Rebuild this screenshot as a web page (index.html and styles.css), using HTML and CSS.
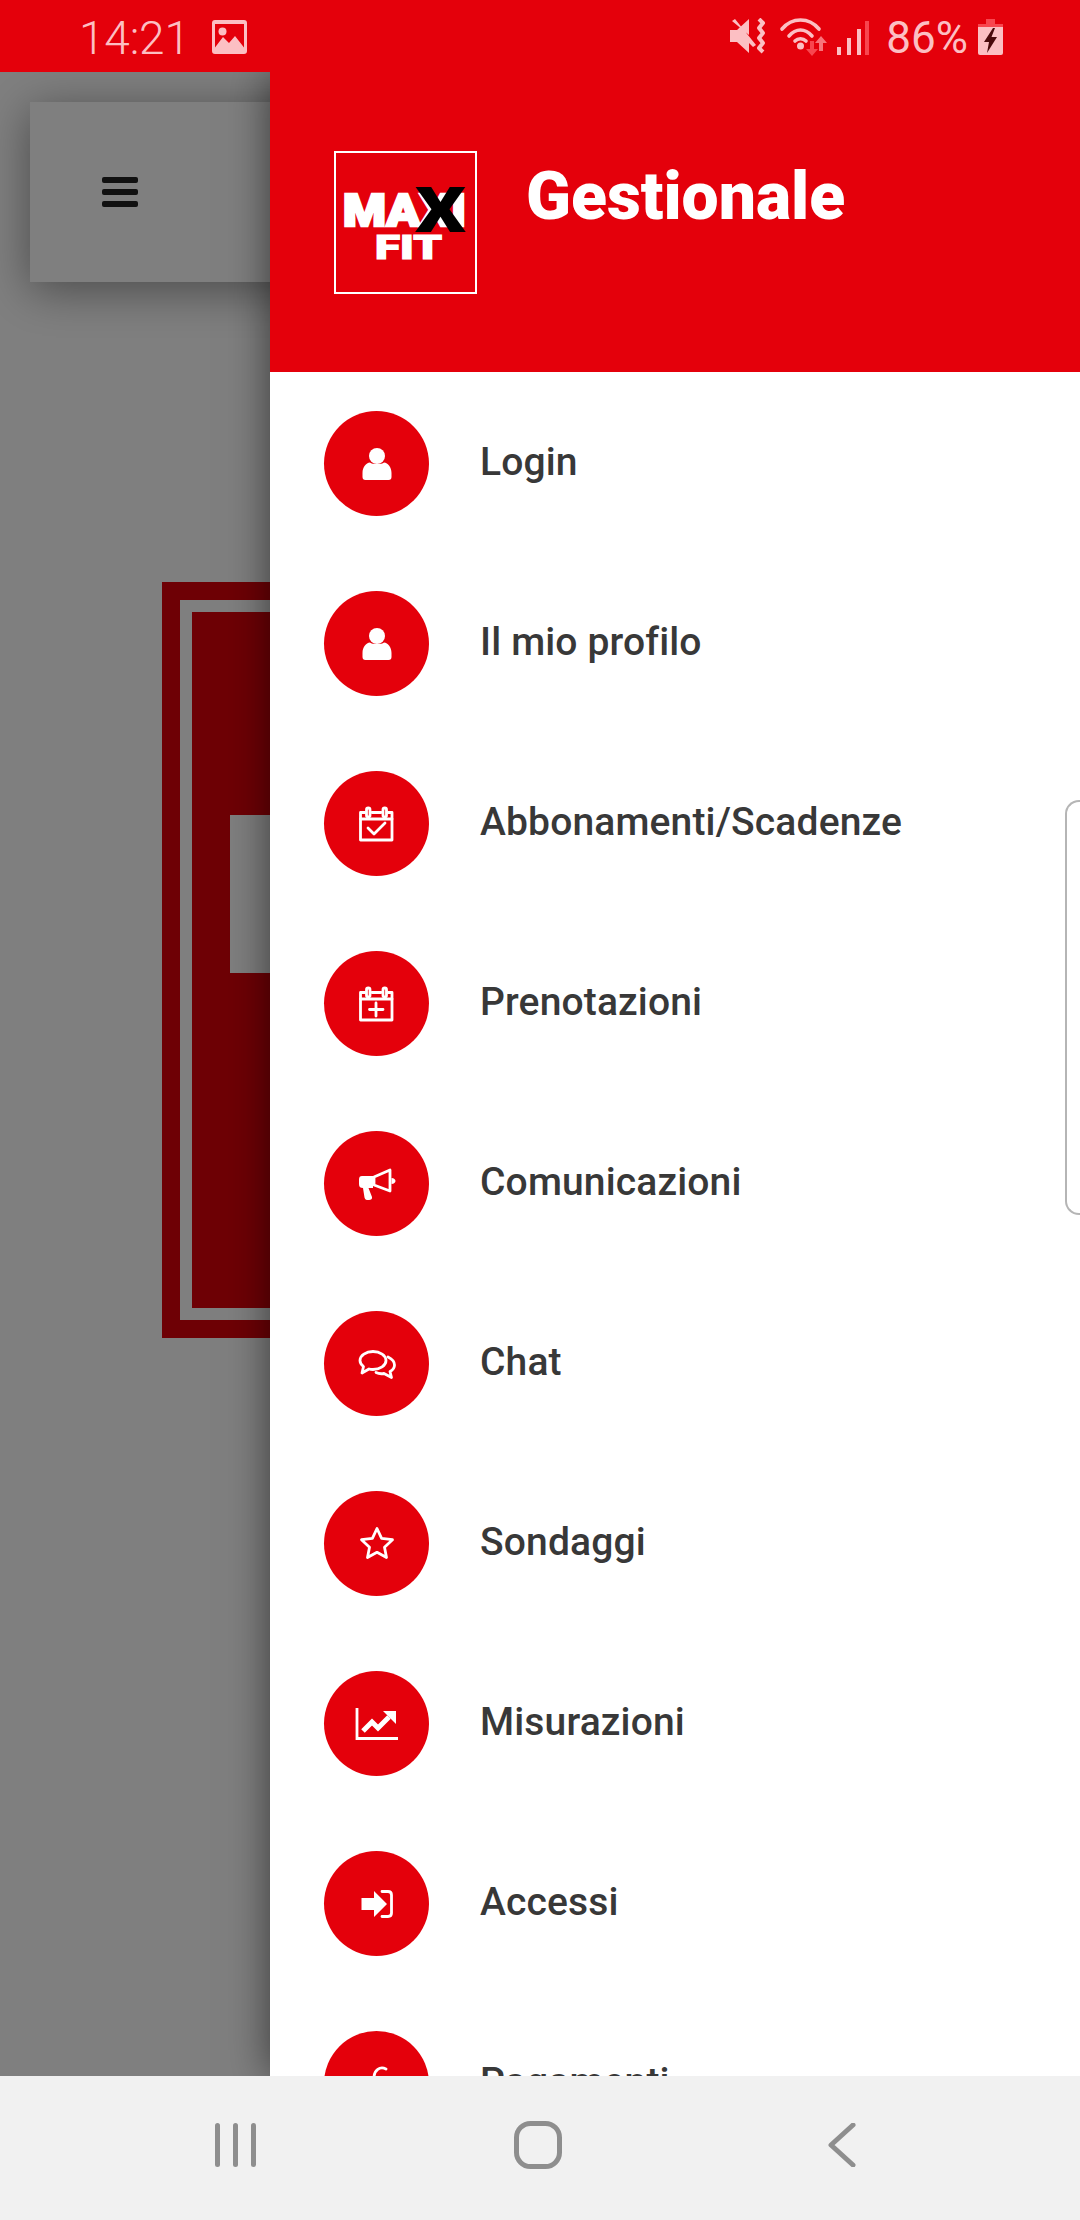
FILE: index.html
```html
<!DOCTYPE html>
<html lang="it">
<head>
<meta charset="utf-8">
<title>Gestionale</title>
<link rel="stylesheet" href="styles.css">
</head>
<body>
<div class="phone">
  <div class="status">
    <span class="time">14:21</span>
    <svg class="st-pic" width="35" height="34" viewBox="0 0 35 34"><path fill-rule="evenodd" d="M3 0H32a3 3 0 0 1 3 3V31a3 3 0 0 1-3 3H3a3 3 0 0 1-3-3V3a3 3 0 0 1 3-3ZM3 27.500 11 17l6 6 6-7 9 11.500V4H3Z"/><circle cx="10.500" cy="11.500" r="4"/></svg>
    <div class="st-right">
      <svg width="36" height="36" viewBox="0 0 36 36"><path d="M0 12H7L19 1V17L2 3 5 1 26 27 23 29 19 25V35L7 24H0Z"/><path class="st-line" d="M29 1 33 5 29 10 33 15 29 20 33 25 29 30 33 34"/></svg>
      <svg class="st-wifi" width="44" height="38" viewBox="0 0 44 38"><path class="st-arc" d="M2 11C12 -1 29 -1 39 11M9 18C16 10 25 10 32 18"/><path class="st-arc" d="M15 23C18 20 23 20 26 23"/><circle class="st-fill" cx="20.500" cy="28" r="3.500"/><path class="st-dim" d="M30 23h4v8h4l-6 7-6-7h4Z"/><path class="st-dim2" d="M42 19l6 7h-4v8h-4v-8h-4Z" transform="translate(-1 -1)"/></svg>
      <svg class="st-signal" width="32" height="34" viewBox="0 0 32 34"><rect x="0" y="26" width="4" height="8"/><rect x="10" y="17" width="4" height="17"/><rect x="20" y="8" width="4" height="26"/><rect class="st-faint" x="28" y="0" width="4" height="34"/></svg>
      <span class="pct">86%</span>
      <svg class="st-batt" width="25" height="36" viewBox="0 0 25 36"><path class="st-dim" d="M8 0H17V5H25V10H0V5H8Z"/><path d="M0 8H25V34a2 2 0 0 1-2 2H2a2 2 0 0 1-2-2Z"/><path class="st-bolt" d="M15 9 6 23H11L9 34 19 18H13.500L17 9Z"/></svg>
    </div>
  </div>

  <div class="main">
    <div class="page">
      <div class="bar">
        <div class="burger"><i></i><i></i><i></i></div>
      </div>
      <div class="frame"><div class="frame-gap"><div class="frame-core"><div class="frame-hole"></div></div></div></div>
    </div>
    <div class="scrim"></div>

    <aside class="drawer">
      <header class="drawer-head">
        <svg class="logo" width="143" height="143" viewBox="0 0 143 143">
          <rect class="logo-box" x="1" y="1" width="141" height="141"/>
          <text class="logo-max" x="9" y="75" textLength="123" lengthAdjust="spacingAndGlyphs">MAXI</text>
          <text class="logo-x" x="81" y="81" textLength="51" lengthAdjust="spacingAndGlyphs">X</text>
          <text class="logo-fit" x="41" y="108" textLength="67" lengthAdjust="spacingAndGlyphs">FIT</text>
        </svg>
        <h1 class="title">Gestionale</h1>
      </header>
      <nav class="menu">
        <a class="item"><span class="dot"><svg viewBox="-24 -24 48 48"><use href="#i-user"/></svg></span><span class="label">Login</span></a>
        <a class="item"><span class="dot"><svg viewBox="-24 -24 48 48"><use href="#i-user"/></svg></span><span class="label">Il mio profilo</span></a>
        <a class="item"><span class="dot"><svg viewBox="-24 -24 48 48"><use href="#i-cal"/><path class="ln" d="M-9 4-3 10 8-1"/></svg></span><span class="label">Abbonamenti/Scadenze</span></a>
        <a class="item"><span class="dot"><svg viewBox="-24 -24 48 48"><use href="#i-cal"/><path class="ln" d="M-1 -1V12M-7.500 5.500H6"/></svg></span><span class="label">Prenotazioni</span></a>
        <a class="item"><span class="dot"><svg viewBox="-24 -24 48 48"><path class="fl" d="M-15-8H-4V4H-8.500L-5 13C-4.500 15-6 16-8 16H-10C-11.500 16-12 15-12.500 13.500L-14 4C-16.500 4-18 3-18-0V-4.500C-18-7-17-8-15-8Z"/><path class="ln" d="M-3-7 13-14V7L-3 1Z"/><path class="fl" d="M14.500-6C17-6 18.500-4.500 18.500-3S17 0 14.500 0Z"/></svg></span><span class="label">Comunicazioni</span></a>
        <a class="item"><span class="dot"><svg viewBox="-24 -24 48 48"><path class="ln" d="M-4-12.500C-11-12.500-17-8.500-17-3.500-17-1-15.500 1-13.500 2.500L-15 9-8 5C-6.500 5.500-5.500 5.500-4 5.500 3 5.500 9 1.500 9-3.500S3-12.500-4-12.500Z"/><path class="ln" d="M11-7C15-5 17.500-2.500 17.500 1 17.500 4 16 6 13 7.500L14.500 13.500 7 9.500C4 10 1 9.500-1 8.500"/></svg></span><span class="label">Chat</span></a>
        <a class="item"><span class="dot"><svg viewBox="-24 -24 48 48"><path class="ln" d="M0-15.500 4.600-5.700 15.500-4.300 7.500 3.200 9.500 13.500 0 8.300-9.500 13.500-7.500 3.200-15.500-4.300-4.600-5.700Z"/></svg></span><span class="label">Sondaggi</span></a>
        <a class="item"><span class="dot"><svg viewBox="-24 -24 48 48"><path class="ln sq" d="M-20-16V14.500H21"/><path class="ln wide" d="M-14 7-5-2 1 4 12-7"/><path class="fl" d="M6-13H19V0Z"/></svg></span><span class="label">Misurazioni</span></a>
        <a class="item"><span class="dot"><svg viewBox="-24 -24 48 48"><path class="fl" d="M-15.500-6H-3V-13L10 0-3 13V6H-15.500Z"/><path class="ln" d="M5-12.500H11C13.500-12.500 14.500-11.500 14.500-9V9C14.500 11.500 13.500 12.500 11 12.500H5"/></svg></span><span class="label">Accessi</span></a>
        <a class="item"><span class="dot"><svg viewBox="-24 -24 48 48"><path class="ln" d="M9-15C3-18-3-14-3-6V8"/></svg></span><span class="label">Pagamenti</span></a>
      </nav>
    </aside>

    <div class="handle"></div>
  </div>

  <div class="navbar">
    <svg width="41" height="44" viewBox="0 0 41 44"><rect x="0" y="0" width="5" height="44" rx="2.500"/><rect x="18" y="0" width="5" height="44" rx="2.500"/><rect x="36" y="0" width="5" height="44" rx="2.500"/></svg>
    <svg class="nv-home" width="48" height="48" viewBox="0 0 48 48"><rect x="2.500" y="2.500" width="43" height="43" rx="14"/></svg>
    <svg class="nv-back" width="28" height="44" viewBox="0 0 28 44"><path d="M25 2 3 22 25 42"/></svg>
  </div>
</div>

<svg class="defs" width="0" height="0">
  <defs>
    <g id="i-user">
      <circle class="fl" cx="0" cy="-8" r="8"/>
      <path class="fl" d="M-7-1.500C-5 .5 5 .5 7-1.500 11-1 14.500 3 14.500 9V13C14.500 15 13.500 16 11.500 16H-11.500C-13.500 16-14.500 15-14.500 13V9C-14.500 3-11-1-7-1.500Z"/>
    </g>
    <g id="i-cal">
      <path class="ln" d="M-12-11.500H-16.500V16H15V-11.500H11M-5-11.500H4"/>
      <path class="ln" d="M-16.500-5H15"/>
      <rect class="ln" x="-10.500" y="-16" width="3.500" height="9" rx="1.750"/>
      <rect class="ln" x="6" y="-16" width="3.500" height="9" rx="1.750"/>
    </g>
  </defs>
</svg>
</body>
</html>
```

FILE: styles.css
```css
* { box-sizing: border-box; }
html, body { margin: 0; padding: 0; }
body { font-family: Roboto, "Liberation Sans", sans-serif; background: #fff; }
.phone { width: 1080px; height: 2220px; display: flex; flex-direction: column; overflow: hidden; }
.defs { position: absolute; }

/* status bar */
.status { height: 72px; flex: none; background: #e4000b; display: flex; align-items: center; padding: 0 77px 0 79px; color: #fcbfc3; }
.status svg { fill: #fcbfc3; display: block; flex: none; }
.time { font-size: 46px; font-weight: 300; line-height: 72px; letter-spacing: -.2px; margin-top: 3px; }
.st-pic { margin-left: 22px; margin-top: 2px; }
.st-right { margin-left: auto; display: flex; align-items: center; }
.st-line { fill: none !important; stroke: #fcbfc3; stroke-width: 4; stroke-linejoin: round; }
.st-wifi { margin-left: 14px; margin-top: 2px; overflow: visible; }
.status .st-arc { fill: none; stroke: #fcbfc3; stroke-width: 3.600; stroke-linecap: round; }
.status .st-dim { fill: #f8464f; }
.status .st-dim2 { fill: #f8737a; }
.st-signal { margin-left: 13px; margin-top: 3px; }
.status .st-faint { fill: #f8464f; }
.pct { font-size: 44px; font-weight: 400; line-height: 72px; margin-left: 17px; margin-top: 3px; }
.st-batt { margin-left: 10px; margin-top: 2px; }
.status .st-bolt { fill: #4a0a0c; }

/* page behind the drawer */
.main { flex: 1; position: relative; overflow: hidden; }
.page { height: 100%; background: #fff; padding-top: 30px; }
.bar { height: 180px; margin: 0 30px; background: #fff; box-shadow: 0 8px 44px rgba(0,0,0,.42); display: flex; align-items: center; padding: 0 0 0 72px; }
.burger { display: flex; flex-direction: column; gap: 6px; width: 36px; }
.burger i { display: block; height: 6px; border-radius: 2px; background: #222; }
.frame { margin: 300px 162px 0; height: 756px; background: #dc000a; padding: 18px; }
.frame-gap { height: 100%; background: #fff; padding: 12px; }
.frame-core { height: 100%; background: #dc000a; padding-top: 203px; padding-left: 38px; }
.frame-hole { height: 158px; width: 400px; background: #fff; }
.scrim { position: absolute; inset: 0; background: rgba(0,0,0,.5); }

/* drawer */
.drawer { position: absolute; top: 0; left: 270px; right: 0; bottom: 0; background: #fff; overflow: hidden; box-shadow: 0 0 40px rgba(0,0,0,.55); }
.drawer-head { height: 300px; background: #e4000b; display: flex; align-items: center; padding-left: 64px; }
.logo { display: block; flex: none; }
.logo-box { fill: none; stroke: #fff; stroke-width: 2; }
.logo-max { font-family: Roboto, sans-serif; font-weight: 900; font-size: 45px; fill: #fff; stroke: #fff; stroke-width: 2.500; }
.logo-x { font-family: Roboto, sans-serif; font-weight: 900; font-size: 63px; fill: #000; }
.logo-fit { font-family: Roboto, sans-serif; font-weight: 900; font-size: 33px; fill: #fff; stroke: #fff; stroke-width: 1.200; }
.title { margin: 0 0 50px 49px; font-size: 66px; line-height: 70px; font-weight: 900; color: #fff; }
.menu { padding: 39px 0 0 54px; display: flex; flex-direction: column; gap: 75px; }
.item { display: flex; align-items: center; height: 105px; flex: none; }
.dot { width: 105px; height: 105px; flex: none; border-radius: 50%; background: #e4000b; display: flex; align-items: center; justify-content: center; }
.dot svg { width: 48px; height: 48px; display: block; }
.fl { fill: #fff; }
.ln { fill: none; stroke: #fff; stroke-width: 2.800; stroke-linejoin: round; stroke-linecap: round; }
.sq { stroke-linecap: butt; stroke-linejoin: miter; }
.wide { stroke-width: 5; stroke-linecap: butt; stroke-linejoin: miter; }
.label { margin-left: 51px; margin-top: -4px; font-size: 39px; font-weight: 500; line-height: 50px; letter-spacing: .15px; color: #383838; white-space: nowrap; }

.handle { position: absolute; top: 728px; right: 0; width: 15px; height: 415px; border: 2px solid #b5b5b5; border-right: 0; border-radius: 14px 0 0 14px; }

/* navigation bar */
.navbar { height: 144px; flex: none; background: #f1f1f1; display: flex; align-items: center; justify-content: space-between; padding: 0 224px 7px 215px; }
.navbar svg { display: block; fill: #8e8e8e; }
.nv-home { margin-right: 8px; }
.nv-home rect { fill: none; stroke: #8e8e8e; stroke-width: 5; }
.nv-back path { fill: none; stroke: #8e8e8e; stroke-width: 5; stroke-linecap: round; stroke-linejoin: round; }
```
